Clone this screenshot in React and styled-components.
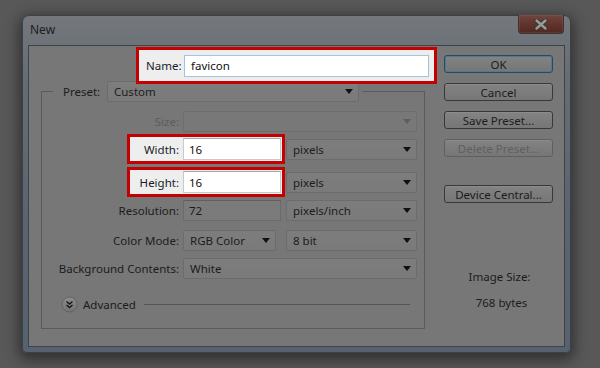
import React from 'react'
import styled, { createGlobalStyle } from 'styled-components'

const GlobalStyle = createGlobalStyle`
  html, body {
    margin: 0;
    padding: 0;
    background: #585858;
  }
  body {
    width: 600px;
    height: 368px;
    overflow: hidden;
    font-family: "Noto Sans", "DejaVu Sans", sans-serif;
    font-size: 11.5px;
    color: #1c1c1c;
  }
  * { box-sizing: border-box; }
`

function Arrow({ disabled }) {
  return (
    <svg width="8" height="5" viewBox="0 0 8 5">
      <path d="M0 0h8L4 5z" fill={disabled ? '#5e5e5e' : '#111'} />
    </svg>
  )
}

function CloseGlyph() {
  return (
    <svg width="14" height="11" viewBox="0 0 14 11">
      <path d="M2.5 1.5l9 8M11.5 1.5l-9 8" stroke="#333" strokeWidth="4.2" strokeLinecap="round" />
      <path d="M2.5 1.5l9 8M11.5 1.5l-9 8" stroke="#9a9a9a" strokeWidth="2.4" strokeLinecap="round" />
    </svg>
  )
}

function ExpandIcon() {
  return (
    <svg width="17" height="17" viewBox="0 0 17 17">
      <defs>
        <linearGradient id="adv" x1="0" y1="0" x2="0" y2="1">
          <stop offset="0" stopColor="#8d8d8d" />
          <stop offset="1" stopColor="#737373" />
        </linearGradient>
      </defs>
      <circle cx="8.5" cy="8.5" r="7.5" fill="url(#adv)" stroke="#626262" />
      <path d="M5.5 5.5l3 2.5 3-2.5M5.5 9l3 2.5 3-2.5" stroke="#151515" strokeWidth="1.4" fill="none" />
    </svg>
  )
}

function Select({ value, width, disabled }) {
  return (
    <SelectBox $width={width} $disabled={disabled}>
      <span>{value}</span>
      <Arrow disabled={disabled} />
    </SelectBox>
  )
}

export default function App() {
  return (
    <>
      <GlobalStyle />
      <Page>
        <Window>
          <TitleBar>
            <Title>New</Title>
            <CloseButton><CloseGlyph /></CloseButton>
          </TitleBar>
          <Client>
            <LeftColumn>
              <NameBox>
                <NameLabel>Name:</NameLabel>
                <NameInput>favicon</NameInput>
              </NameBox>
              <Group>
                <Legend>
                  <span>Preset:</span>
                  <Select value="Custom" width={252} />
                </Legend>
                <Row $top={9} $height={20}>
                  <Label $disabled>Size:</Label>
                  <Select value="" width={234} disabled />
                </Row>
                <Row $top={3} $height={30}>
                  <Spacer />
                  <Highlight>
                    <HighLabel>Width:</HighLabel>
                    <WhiteInput>16</WhiteInput>
                  </Highlight>
                  <Select value="pixels" width={131} />
                </Row>
                <Row $top={3} $height={30}>
                  <Spacer />
                  <Highlight>
                    <HighLabel>Height:</HighLabel>
                    <WhiteInput>16</WhiteInput>
                  </Highlight>
                  <Select value="pixels" width={131} />
                </Row>
                <Row $top={2} $height={22}>
                  <Label>Resolution:</Label>
                  <DimInput>72</DimInput>
                  <Select value="pixels/inch" width={131} />
                </Row>
                <Row $top={8} $height={22}>
                  <Label>Color Mode:</Label>
                  <Select value="RGB Color" width={93} />
                  <Gap />
                  <Select value="8 bit" width={131} />
                </Row>
                <Row $top={6} $height={22}>
                  <Label>Background Contents:</Label>
                  <Select value="White" width={234} />
                </Row>
                <AdvancedRow>
                  <ExpandIcon />
                  <span>Advanced</span>
                  <Rule />
                </AdvancedRow>
              </Group>
            </LeftColumn>
            <RightColumn>
              <Button $primary>OK</Button>
              <Button>Cancel</Button>
              <Button>Save Preset...</Button>
              <Button $disabled>Delete Preset...</Button>
              <Button $top={28}>Device Central...</Button>
              <SizeInfo>
                <div>Image Size:</div>
                <SizeValue>768 bytes</SizeValue>
              </SizeInfo>
            </RightColumn>
          </Client>
        </Window>
      </Page>
    </>
  )
}

const Page = styled.div`
  padding: 15px 0 0 22px;
`

const Window = styled.div`
  width: 549px;
  height: 338px;
  display: flex;
  flex-direction: column;
  padding: 0 5px 5px 5px;
  border: 1px solid #3c4148;
  border-radius: 7px 7px 5px 5px;
  background: linear-gradient(#74787d, #676d74 18%, #5b6570 60%, #56626e);
  box-shadow: 0 4px 14px 3px rgba(0, 0, 0, 0.45);
`

const TitleBar = styled.div`
  height: 29px;
  display: flex;
  align-items: flex-start;
`

const Title = styled.div`
  padding: 5px 0 0 2px;
  font-family: "Noto Sans", "DejaVu Sans", sans-serif;
  font-size: 12px;
  color: #1d1d1d;
`

const CloseButton = styled.div`
  margin: -1px 1px 0 auto;
  width: 46px;
  height: 19px;
  display: flex;
  align-items: center;
  justify-content: center;
  border: 1px solid #3a3433;
  border-top: none;
  border-radius: 0 0 4px 4px;
  background: linear-gradient(#70463f, #62362f 45%, #52281f);
  box-shadow: inset 0 0 0 1px rgba(170, 120, 110, 0.2);
`

const Client = styled.div`
  flex: 1;
  display: flex;
  background: #777777;
  border: 1px solid #3b424a;
`

const LeftColumn = styled.div`
  width: 408px;
  display: flex;
  flex-direction: column;
`

const NameBox = styled.div`
  position: relative;
  z-index: 1;
  margin: 1px 0 0 auto;
  width: 301px;
  height: 37px;
  display: flex;
  align-items: center;
  padding: 0 5px 0 7px;
  border: 3px solid #c40000;
  background: #eeeeee;
`

const NameLabel = styled.span`
  width: 38px;
  color: #1a1a2a;
`

const NameInput = styled.div`
  flex: 1;
  height: 22px;
  display: flex;
  align-items: center;
  padding-left: 6px;
  background: #ffffff;
  border: 1px solid #a5c3dc;
  color: #111;
`

const Group = styled.fieldset`
  margin: -4px 0 0 12px;
  width: 384px;
  padding: 0 0 15px 11px;
  border: 1px solid #5b5b5b;
  min-width: 0;
`

const Legend = styled.legend`
  display: flex;
  align-items: center;
  padding: 0 3px 0 10px;
  height: 22px;
  span:first-child {
    width: 44px;
  }
`

const Row = styled.div`
  margin-top: ${p => p.$top}px;
  height: ${p => p.$height}px;
  display: flex;
  align-items: center;
`

const Label = styled.div`
  width: 126px;
  margin-right: 4px;
  text-align: right;
  white-space: nowrap;
  color: ${p => (p.$disabled ? '#5c5c5c' : '#1c1c1c')};
`

const Spacer = styled.div`
  width: 74px;
`

const Gap = styled.div`
  width: 10px;
`

const Highlight = styled.div`
  height: 30px;
  display: flex;
  align-items: center;
  padding: 0 1px 0 0;
  margin-right: 1px;
  border: 3px solid #c40000;
  background: #eeeeee;
`

const HighLabel = styled.div`
  width: 49px;
  margin-right: 4px;
  text-align: right;
  color: #1a1a2a;
`

const WhiteInput = styled.div`
  width: 98px;
  height: 22px;
  display: flex;
  align-items: center;
  padding-left: 5px;
  background: #ffffff;
  border: 1px solid #c9c9c9;
  border-top-color: #a9a9a9;
  color: #111;
`

const DimInput = styled.div`
  width: 98px;
  height: 21px;
  margin-right: 5px;
  display: flex;
  align-items: center;
  padding-left: 5px;
  background: #7b7b7b;
  border: 1px solid #6b6b6b;
  border-top-color: #5f5f5f;
`

const SelectBox = styled.div`
  width: ${p => p.$width}px;
  height: 21px;
  flex-shrink: 0;
  display: flex;
  align-items: center;
  justify-content: space-between;
  padding: 0 5px 0 6px;
  border: 1px solid ${p => (p.$disabled ? '#6e6e6e' : '#6c6c6c')};
  border-radius: 2px;
  background: ${p => (p.$disabled ? '#787878' : 'linear-gradient(#7d7d7d, #7a7a7a)')};
  span {
    white-space: nowrap;
  }
`

const AdvancedRow = styled.div`
  margin-top: 16px;
  height: 18px;
  display: flex;
  align-items: center;
  gap: 5px;
  padding-left: 8px;
`

const Rule = styled.div`
  width: 266px;
  margin-left: 3px;
  height: 1px;
  background: #555555;
`

const RightColumn = styled.div`
  margin-left: 7px;
  width: 109px;
  padding-top: 9px;
  display: flex;
  flex-direction: column;
`

const Button = styled.div`
  margin-top: ${p => (p.$top !== undefined ? p.$top : 10)}px;
  height: 18px;
  display: flex;
  align-items: center;
  justify-content: center;
  border-radius: 3px;
  border: 1px solid ${p => (p.$primary ? '#294a5e' : p.$disabled ? '#5f5f5f' : '#383838')};
  background: linear-gradient(#838383, #767676);
  box-shadow: ${p => (p.$primary ? 'inset 0 0 0 1px #4d7a92' : 'inset 0 1px 0 #8c8c8c')};
  color: ${p => (p.$disabled ? '#5f5f5f' : '#1c1c1c')};
  &:first-child {
    margin-top: 0;
  }
`

const SizeInfo = styled.div`
  margin-top: 66px;
  text-align: center;
  padding-left: 2px;
`

const SizeValue = styled.div`
  margin-top: 11px;
  padding-left: 4px;
`
